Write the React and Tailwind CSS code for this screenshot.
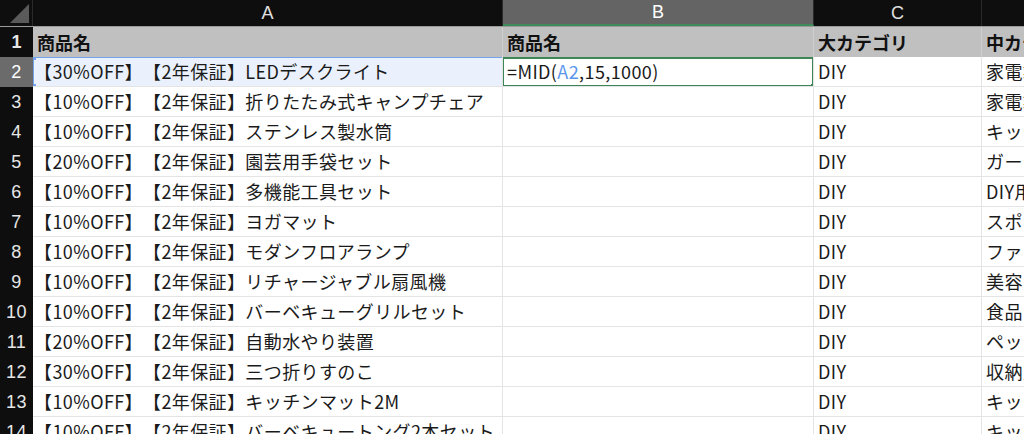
import React from 'react'

const rows = [
  ['【30%OFF】【2年保証】LEDデスクライト', '家電製品'],
  ['【10%OFF】【2年保証】折りたたみ式キャンプチェア', '家電製品'],
  ['【10%OFF】【2年保証】ステンレス製水筒', 'キッチン用品'],
  ['【20%OFF】【2年保証】園芸用手袋セット', 'ガーデニング'],
  ['【10%OFF】【2年保証】多機能工具セット', 'DIY用品'],
  ['【10%OFF】【2年保証】ヨガマット', 'スポーツ用品'],
  ['【10%OFF】【2年保証】モダンフロアランプ', 'ファッション'],
  ['【10%OFF】【2年保証】リチャージャブル扇風機', '美容・健康'],
  ['【10%OFF】【2年保証】バーベキューグリルセット', '食品・飲料'],
  ['【20%OFF】【2年保証】自動水やり装置', 'ペット用品'],
  ['【30%OFF】【2年保証】三つ折りすのこ', '収納家具'],
  ['【10%OFF】【2年保証】キッチンマット2M', 'キッチン用品'],
  ['【10%OFF】【2年保証】バーベキュートング2本セット', 'キッチン用品'],
]

const cellFont = { fontFamily: '"Noto Sans CJK JP", "Noto Sans", sans-serif' }
const headFont = { fontFamily: '"Liberation Sans", Arial, sans-serif' }

const RowHead = ({ n, active }) => (
  <div
    style={headFont}
    className={`w-[33px] shrink-0 flex items-center justify-center text-[18px] ${active ? 'bg-[#6b6b6b] text-white' : 'bg-[#0e0e0e] text-[#e6e6e6]'}`}
  >
    {n}
  </div>
)

export default function App() {
  return (
    <div className="w-[1024px] h-[434px] overflow-hidden bg-white [text-spacing-trim:space-all]">
      {/* column headers */}
      <div style={headFont} className="flex h-[27px] bg-[#0e0e0e] text-[#e0e0e0] text-[18px] border-b border-[#9a9a9a]">
        <div className="relative w-[33px] shrink-0 border-r border-[#2a2a2a]">
          <div className="absolute right-[3px] bottom-[3px] w-0 h-0 border-l-[19px] border-l-transparent border-b-[19px] border-b-[#5a5a5a]" />
        </div>
        <div className="w-[470px] shrink-0 flex items-center justify-center border-r border-[#2a2a2a]">A</div>
        <div className="w-[311px] shrink-0 flex items-center justify-center bg-[#646464] text-white border-r border-[#2a2a2a] border-b-2 border-b-[#3f8a5a]">B</div>
        <div className="w-[168px] shrink-0 flex items-center justify-center border-r border-[#2a2a2a]">C</div>
        <div className="flex-1" />
      </div>

      {/* row 1: headings */}
      <div style={cellFont} className="flex h-[30px] text-[18px] font-bold text-[#111]">
        <RowHead n={1} />
        <div className="w-[470px] shrink-0 bg-[#c0c0c0] border-r border-[#cfcfcf] px-[4px] flex items-center">商品名</div>
        <div className="w-[311px] shrink-0 bg-[#c0c0c0] border-r border-[#cfcfcf] px-[4px] flex items-center">商品名</div>
        <div className="w-[168px] shrink-0 bg-[#c0c0c0] border-r border-[#cfcfcf] px-[4px] flex items-center">大カテゴリ</div>
        <div className="flex-1 bg-[#c0c0c0] px-[4px] flex items-center whitespace-nowrap overflow-hidden">中カテゴリ</div>
      </div>

      {rows.map(([name, sub], i) => {
        const n = i + 2
        const first = n === 2
        return (
          <div key={n} style={cellFont} className="flex h-[30px] text-[18px] text-[#1a1a1a] tracking-[0.4px]">
            <RowHead n={n} active={first} />
            <div className={`relative w-[470px] shrink-0 border-r border-b border-[#e4e4e4] px-[1px] flex items-center whitespace-nowrap overflow-hidden ${first ? 'bg-[#eaf1fc]' : ''}`}>
              {name}
              {first && (
                <>
                  <div className="absolute left-0 top-0 bottom-[-1px] right-[-1px] border border-[#74a2e8]" />
                  <div className="absolute left-0 top-0 w-[3px] h-[3px] bg-[#74a2e8]" />
                  <div className="absolute left-0 bottom-[-1px] w-[3px] h-[3px] bg-[#74a2e8]" />
                </>
              )}
            </div>
            <div className="relative w-[311px] shrink-0 border-r border-b border-[#e4e4e4] px-[4px] flex items-center whitespace-nowrap overflow-hidden">
              {first && (
                <>
                  <span>=MID(<span className="text-[#5b96ec]">A2</span>,15,1000)</span>
                  <div className="absolute left-[-1px] top-0 bottom-[-1px] right-[-1px] border-2 border-[#3d8656]" />
                  <div className="absolute right-[-2px] bottom-[-2px] w-[4px] h-[4px] bg-[#3d8656]" />
                </>
              )}
            </div>
            <div className="w-[168px] shrink-0 border-r border-b border-[#e4e4e4] px-[4px] flex items-center">DIY</div>
            <div className="flex-1 border-b border-[#e4e4e4] px-[4px] flex items-center whitespace-nowrap overflow-hidden">{sub}</div>
          </div>
        )
      })}
    </div>
  )
}
